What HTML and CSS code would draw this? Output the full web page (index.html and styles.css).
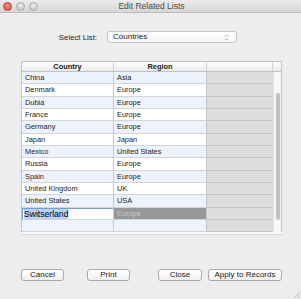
FILE: index.html
```html
<!DOCTYPE html>
<html lang="en">
<head>
    <meta charset="UTF-8">
    <title>Edit Related Lists</title>
    <link rel="stylesheet" href="styles.css">
</head>
<body>
    <div class="window">
        <div class="titlebar">
            <div class="lights">
                <span class="light close"></span>
                <span class="light"></span>
                <span class="light"></span>
            </div>
            <div class="title">Edit Related Lists</div>
        </div>

        <div class="content">
            <div class="select-row">
                <label for="listSelect">Select List:</label>
                <div class="popup" id="listSelect">
                    <span>Countries</span>
                    <svg width="5" height="7" viewBox="0 0 5 7">
                        <path d="M1 2.5 L2.5 1 L4 2.5 M1 4.5 L2.5 6 L4 4.5" fill="none" stroke="#8a8a8a" stroke-width="0.7"/>
                    </svg>
                </div>
            </div>

            <div class="table">
                <div class="thead">
                    <div class="th col-country">Country</div>
                    <div class="th col-region">Region</div>
                    <div class="th col-fill"></div>
                    <div class="th col-scroll"></div>
                </div>
                <div class="tbody">
                    <div class="rows">
                        <div class="row"><div class="td col-country">China</div><div class="td col-region">Asia</div><div class="td col-fill"></div></div>
                        <div class="row"><div class="td col-country">Denmark</div><div class="td col-region">Europe</div><div class="td col-fill"></div></div>
                        <div class="row"><div class="td col-country">Dubia</div><div class="td col-region">Europe</div><div class="td col-fill"></div></div>
                        <div class="row"><div class="td col-country">France</div><div class="td col-region">Europe</div><div class="td col-fill"></div></div>
                        <div class="row"><div class="td col-country">Germany</div><div class="td col-region">Europe</div><div class="td col-fill"></div></div>
                        <div class="row"><div class="td col-country">Japan</div><div class="td col-region">Japan</div><div class="td col-fill"></div></div>
                        <div class="row"><div class="td col-country">Mexico</div><div class="td col-region">United States</div><div class="td col-fill"></div></div>
                        <div class="row"><div class="td col-country">Russia</div><div class="td col-region">Europe</div><div class="td col-fill"></div></div>
                        <div class="row"><div class="td col-country">Spain</div><div class="td col-region">Europe</div><div class="td col-fill"></div></div>
                        <div class="row"><div class="td col-country">United Kingdom</div><div class="td col-region">UK</div><div class="td col-fill"></div></div>
                        <div class="row"><div class="td col-country">United States</div><div class="td col-region">USA</div><div class="td col-fill"></div></div>
                        <div class="row editing">
                            <div class="td col-country"><span class="edit-field"><span class="selected">Switserland</span></span></div>
                            <div class="td col-region">Europe</div>
                            <div class="td col-fill"></div>
                        </div>
                        <div class="row"><div class="td col-country"></div><div class="td col-region"></div><div class="td col-fill"></div></div>
                    </div>
                    <div class="scrollbar"><span class="thumb"></span></div>
                </div>
                <div class="tfoot"></div>
            </div>

            <div class="buttons">
                <button type="button" class="btn btn-cancel">Cancel</button>
                <button type="button" class="btn btn-print">Print</button>
                <button type="button" class="btn btn-close">Close</button>
                <button type="button" class="btn btn-apply">Apply to Records</button>
            </div>
        </div>

        <svg class="grip" width="7" height="7" viewBox="0 0 7 7">
            <path d="M1 7 L7 1 M4 7 L7 4" stroke="#b0b0b0" stroke-width="0.8"/>
        </svg>
    </div>
</body>
</html>
```

FILE: styles.css
```css
body {
    margin: 0;
    background-color: #ededed;
    font-family: "Liberation Sans", Arial, sans-serif;
    color: #222;
}
.window {
    position: relative;
    width: 301px;
    height: 299px;
    background-color: #ededed;
    overflow: hidden;
}
.titlebar {
    height: 12px;
    border-bottom: 1px solid #bdbdbd;
    background: linear-gradient(#ececec, #d6d6d6);
    display: flex;
    align-items: center;
    position: relative;
}
.lights {
    display: flex;
    gap: 4px;
    padding-left: 3px;
}
.light {
    width: 7px;
    height: 7px;
    border-radius: 50%;
    border: 0.5px solid #a9a9a9;
    background: radial-gradient(circle at 50% 35%, #eaeaea, #c4c4c4);
}
.light.close {
    border-color: #b8423a;
    background: radial-gradient(circle at 50% 35%, #f7948c, #d9453b);
}
.title {
    flex: 1;
    text-align: center;
    font-size: 8.5px;
    color: #4a4a4a;
    margin-right: 36px;
}
.content {
    padding: 18px 0 0 21px;
}
.select-row {
    display: flex;
    align-items: center;
    height: 12px;
}
.select-row label {
    width: 76px;
    padding-right: 10px;
    text-align: right;
    font-size: 7.8px;
    color: #222;
}
.popup {
    width: 130px;
    height: 12px;
    border: 1px solid #c4c4c4;
    border-radius: 3px;
    background: linear-gradient(#ffffff, #f3f3f3);
    display: flex;
    align-items: center;
    justify-content: space-between;
    padding: 0 7px 0 5px;
    box-sizing: border-box;
    font-size: 8px;
    color: #222;
}
.popup span {
    margin-top: -1px;
}
.table {
    margin-top: 18px;
    width: 261px;
    border: 1px solid #c4c4c4;
    border-bottom: none;
    box-sizing: border-box;
    background-color: #f6f6f6;
}
.thead {
    display: flex;
    height: 9px;
    border-bottom: 1px solid #c2c2c2;
    background: linear-gradient(#fdfdfd, #ebebeb);
}
.th {
    font-size: 7.4px;
    font-weight: bold;
    text-align: center;
    line-height: 9px;
    border-right: 1px solid #d0d0d0;
    box-sizing: border-box;
}
.col-country {
    width: 92px;
}
.col-region {
    width: 93px;
}
.col-fill {
    width: 66px;
}
.col-scroll {
    width: 8px;
    border-right: none;
}
.tbody {
    display: flex;
}
.rows {
    width: 251px;
}
.row {
    display: flex;
    height: 12.33px;
    background-color: #ffffff;
}
.row:nth-child(odd) {
    background-color: #ecf2fe;
}
.td {
    box-sizing: border-box;
    border-bottom: 1px solid #d4d4d4;
    border-right: 1px solid #c8c8c8;
    font-size: 7.4px;
    line-height: 11px;
    padding-left: 3px;
    color: #222;
    white-space: nowrap;
    overflow: hidden;
}
.td.col-fill {
    background-color: #dcdcdc;
    border-bottom-color: #c4c4c4;
    border-right: none;
}
.row.editing {
    background-color: #ffffff;
}
.row.editing .col-region {
    background-color: #989898;
    color: #c6c6c6;
}
.edit-field {
    display: block;
    margin-left: -3px;
    height: 10px;
    width: 90px;
    border: 1px solid #6f9fd8;
    box-shadow: 0 0 1px #8db6ea;
    background-color: #fff;
    line-height: 10px;
    font-size: 8.6px;
    color: #000;
    padding-left: 1px;
}
.selected {
    background-color: #b4d4fb;
}
.scrollbar {
    width: 8px;
    background-color: #f7f7f7;
    border-left: 1px solid #e2e2e2;
    box-sizing: border-box;
    padding: 21px 0 0 2px;
}
.thumb {
    display: block;
    width: 4px;
    height: 127px;
    border-radius: 2px;
    background-color: #c2c2c2;
}
.tfoot {
    height: 2px;
    background-color: #f6f6f6;
    border-bottom: 1px solid #dadada;
    margin-left: -1px;
    margin-right: -1px;
}
.buttons {
    display: flex;
    margin-top: 34px;
}
.btn {
    height: 12px;
    padding: 0;
    border: 1px solid #a9a9a9;
    border-radius: 3px;
    background: linear-gradient(#ffffff, #f0f0f0);
    font-family: "Liberation Sans", Arial, sans-serif;
    font-size: 8px;
    color: #222;
    line-height: 10px;
}
.btn-cancel {
    width: 43px;
}
.btn-print {
    width: 43px;
    margin-left: 23px;
}
.btn-close {
    width: 44px;
    margin-left: 28px;
}
.btn-apply {
    width: 74px;
    margin-left: 6px;
}
.grip {
    position: absolute;
    right: 1px;
    bottom: 1px;
}
```
